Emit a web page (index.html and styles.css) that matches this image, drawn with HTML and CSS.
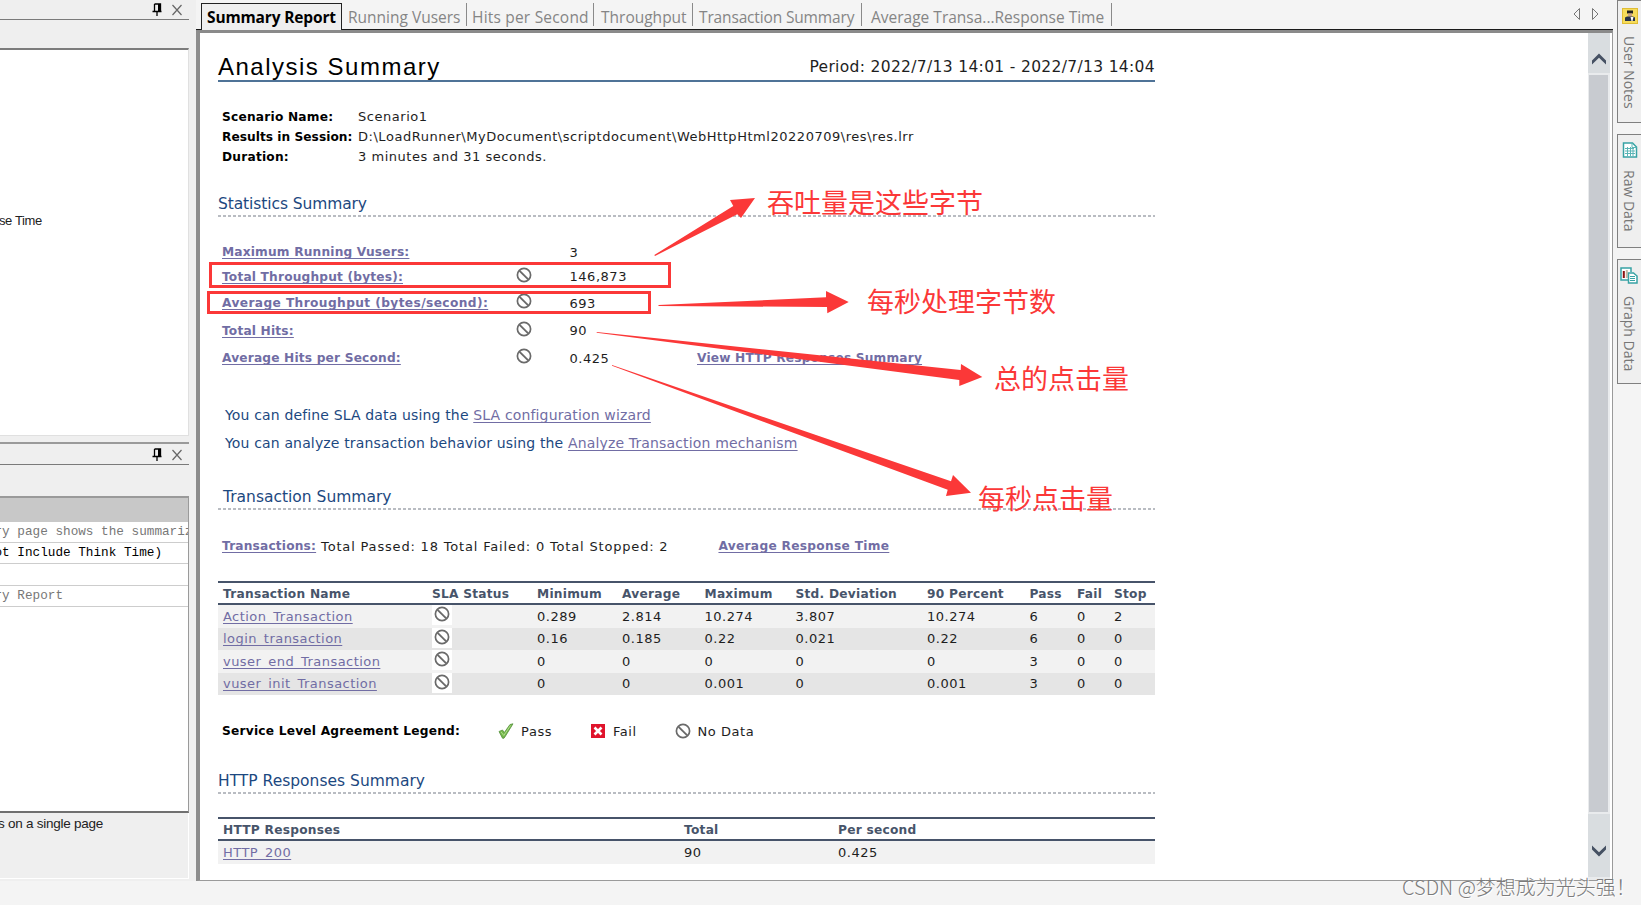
FILE: index.html
```html
<!DOCTYPE html>
<html lang="en">
<head>
    <meta charset="UTF-8">
    <title>Analysis Summary</title>
    <link rel="stylesheet" href="styles.css">
</head>
<body>
    <svg class="defs" width="0" height="0">
        <symbol id="nodata" viewBox="0 0 16 16">
            <circle cx="8" cy="8" r="6.6" fill="#fff" stroke="#6a6a6a" stroke-width="1.7"/>
            <path d="M3.6 3.8l8.6 8.6" stroke="#6a6a6a" stroke-width="1.9"/>
        </symbol>
        <symbol id="pin" viewBox="0 0 10 14">
            <path d="M2.5 1h6v7M2.5 1v7M0.5 8.5h9M5 8.5V13" fill="none" stroke="#000" stroke-width="1.3"/>
            <path d="M6 1h2.5v7H6z"/>
        </symbol>
        <symbol id="close" viewBox="0 0 10 12">
            <path d="M0.5 1l9 10M9.5 1l-9 10" stroke="#666" stroke-width="1.2"/>
        </symbol>
    </svg>

    <div class="app">
        <aside class="left">
            <div class="pane-title first">
                <svg width="10" height="14"><use href="#pin"/></svg>
                <svg width="10" height="12"><use href="#close"/></svg>
            </div>
            <div class="pane-gap"></div>
            <div class="tree"><span>se Time</span></div>
            <div class="pane-title">
                <svg width="10" height="14"><use href="#pin"/></svg>
                <svg width="10" height="12"><use href="#close"/></svg>
            </div>
            <div class="pane-gap second"></div>
            <div class="props">
                <div class="prop-head"></div>
                <div class="prop"><span>ry page shows the summariz</span></div>
                <div class="prop strong"><span>ot Include Think Time)</span></div>
                <div class="prop"></div>
                <div class="prop"><span>ry Report</span></div>
            </div>
            <div class="hint"><span>s on a single page</span></div>
        </aside>

        <main class="main">
            <nav class="tabs">
                <div class="tab active"><span>Summary Report</span></div>
                <div class="tab t1"><span>Running Vusers</span></div>
                <div class="tab t2"><span>Hits per Second</span></div>
                <div class="tab t3"><span>Throughput</span></div>
                <div class="tab t4"><span>Transaction Summary</span></div>
                <div class="tab t5"><span>Average Transa...Response Time</span></div>
                <div class="arrows">
                    <svg width="8" height="14"><path d="M6.5 1.5v11L1 7z" fill="none" stroke="#777"/></svg>
                    <svg width="8" height="14"><path d="M1.5 1.5v11L7 7z" fill="none" stroke="#777"/></svg>
                </div>
            </nav>

            <div class="frame">
                <div class="report">
                    <header class="head">
                        <h1>Analysis Summary</h1>
                        <span class="period">Period: 2022/7/13 14:01 - 2022/7/13 14:04</span>
                    </header>

                    <div class="info">
                        <b>Scenario Name:</b><span>Scenario1</span>
                        <b class="tight">Results in Session:</b><span>D:\LoadRunner\MyDocument\scriptdocument\WebHttpHtml20220709\res\res.lrr</span>
                        <b>Duration:</b><span>3 minutes and 31 seconds.</span>
                    </div>

                    <h2 class="h-stat">Statistics Summary</h2>

                    <div class="stats">
                        <div class="stat"><a href="#">Maximum Running Vusers:</a><i></i><span>3</span></div>
                        <div class="stat"><a href="#">Total Throughput (bytes):</a><svg><use href="#nodata"/></svg><span>146,873</span></div>
                        <div class="stat"><a class="wide" href="#">Average Throughput (bytes/second):</a><svg><use href="#nodata"/></svg><span>693</span></div>
                        <div class="stat"><a href="#">Total Hits:</a><svg><use href="#nodata"/></svg><span>90</span></div>
                        <div class="stat"><a href="#">Average Hits per Second:</a><svg><use href="#nodata"/></svg><span>0.425</span><a href="#">View HTTP Responses Summary</a></div>
                    </div>

                    <div class="notes">
                        <p>You can define SLA data using the <a href="#">SLA configuration wizard</a></p>
                        <p>You can analyze transaction behavior using the <a href="#">Analyze Transaction mechanism</a></p>
                    </div>

                    <h2 class="h-trans">Transaction Summary</h2>

                    <div class="totals">
                        <a href="#">Transactions:</a>
                        <span>Total Passed: 18 Total Failed: 0 Total Stopped: 2</span>
                        <a class="avg" href="#">Average Response Time</a>
                    </div>

                    <div class="table trans">
                        <div class="row th"><span>Transaction Name</span><span>SLA Status</span><span>Minimum</span><span>Average</span><span>Maximum</span><span>Std. Deviation</span><span>90 Percent</span><span>Pass</span><span>Fail</span><span>Stop</span></div>
                        <div class="row"><a href="#">Action_Transaction</a><svg><use href="#nodata"/></svg><span>0.289</span><span>2.814</span><span>10.274</span><span>3.807</span><span>10.274</span><span>6</span><span>0</span><span>2</span></div>
                        <div class="row"><a href="#">login_transaction</a><svg><use href="#nodata"/></svg><span>0.16</span><span>0.185</span><span>0.22</span><span>0.021</span><span>0.22</span><span>6</span><span>0</span><span>0</span></div>
                        <div class="row"><a href="#">vuser_end_Transaction</a><svg><use href="#nodata"/></svg><span>0</span><span>0</span><span>0</span><span>0</span><span>0</span><span>3</span><span>0</span><span>0</span></div>
                        <div class="row"><a href="#">vuser_init_Transaction</a><svg><use href="#nodata"/></svg><span>0</span><span>0</span><span>0.001</span><span>0</span><span>0.001</span><span>3</span><span>0</span><span>0</span></div>
                    </div>

                    <div class="legend">
                        <b>Service Level Agreement Legend:</b>
                        <svg viewBox="0 0 16 16"><path d="M1 8.500l3.500-1.500 1.800 2.500L12 1.500 15 .8 7.500 13 6 15.200H4.500z" fill="#74b84a" stroke="#55913c" stroke-width=".8"/><path d="M3 8.800l2.800 3.700L12.500 2.500" fill="none" stroke="#b0dc8c"/></svg>
                        <span>Pass</span>
                        <svg viewBox="0 0 16 16"><rect x="1" y="1" width="14" height="14" fill="#e0142c"/><path d="M4.500 4.500l7 7M11.500 4.500l-7 7" stroke="#fff" stroke-width="2.600"/></svg>
                        <span>Fail</span>
                        <svg><use href="#nodata"/></svg>
                        <span>No Data</span>
                    </div>

                    <h2 class="h-http">HTTP Responses Summary</h2>

                    <div class="table http">
                        <div class="row th"><span>HTTP Responses</span><span>Total</span><span>Per second</span></div>
                        <div class="row"><a href="#">HTTP_200</a><span>90</span><span>0.425</span></div>
                    </div>
                </div>

                <div class="scroll">
                    <div class="btn up"><svg width="14" height="12"><path d="M0 7.500L7 .5l7 7v4L7 4.800 0 11.500z" fill="#465163"/></svg></div>
                    <div class="thumb"></div>
                    <div class="btn down"><svg width="14" height="12"><path d="M0 4.500l7 7 7-7v-4L7 7.200 0 .5z" fill="#465163"/></svg></div>
                </div>
            </div>
        </main>

        <aside class="right">
            <div class="side s1">
                <svg width="16" height="16"><rect x=".5" y=".5" width="15" height="15" fill="#f6dc5a" stroke="#e0bd34"/><path d="M5 2.500h6v3H5z" fill="#222"/><path d="M6 5.500h4v3H6z" fill="#c9a08c"/><path d="M3 13V9.500l2-1h6l2 1V13z" fill="#26324a"/><path d="M8.500 9h3l-1 4h-1z" fill="#fff"/></svg>
                <span>User Notes</span>
            </div>
            <div class="side s2">
                <svg width="16" height="16"><path d="M1.500 1h9l4 4v10h-13z" fill="#fff" stroke="#38a3a5" stroke-width="1.500"/><path d="M10 1v4.500h4.500M3 6.500h9M3 9h10M3 11.500h10M5.500 5v9M8.500 5v9M11 7v7" fill="none" stroke="#5bb5b6"/></svg>
                <span>Raw Data</span>
            </div>
            <div class="side s3">
                <svg width="18" height="17"><path d="M8 13H1V1h10v4" fill="#fff" stroke="#38a3a5" stroke-width="1.500"/><path d="M3.800 4v7" stroke="#8a1010" stroke-width="2"/><path d="M6.800 3v8" stroke="#c9b9a6" stroke-width="2"/><path d="M8.500 6h5l3.500 3v7H8.500z" fill="#fff" stroke="#38a3a5" stroke-width="1.500"/><path d="M10 9.500h5M10 11.500h5M10 13.500h5" stroke="#38a3a5"/></svg>
                <span>Graph Data</span>
            </div>
        </aside>
    </div>

    <!-- red marks drawn over the report -->
    <svg class="marks" width="1641" height="905" fill="#fb3838">
        <rect x="210.500" y="263.500" width="459" height="23" fill="none" stroke="#fb3838" stroke-width="3"/>
        <rect x="208.500" y="292.500" width="441" height="20" fill="none" stroke="#fb3838" stroke-width="3"/>
        <path d="M654.300 255L733.300 206 730 200 755 198 741 218 737.300 214.300 655 256z"/>
        <path d="M658.500 305L826 297.300V291L848.700 302 827.300 313.300 827 307 658.500 306z"/>
        <path d="M596.700 332L960.700 370 961 364 982.300 377 959.300 386V380L596.700 332.800z"/>
        <path d="M612 365L951 481.300 953 475 971 492.700 946 496 947.700 489.700 612 365.800z"/>
    </svg>
    <div class="mark m1">吞吐量是这些字节</div>
    <div class="mark m2">每秒处理字节数</div>
    <div class="mark m3">总的点击量</div>
    <div class="mark m4">每秒点击量</div>
    <div class="watermark">CSDN @梦想成为光头强！</div>
</body>
</html>
```
FILE: styles.css
```css
* {
    margin: 0;
    padding: 0;
    box-sizing: border-box;
}

body {
    width: 1641px;
    height: 905px;
    overflow: hidden;
    position: relative;
    background: #f4f4f4;
    font-family: "DejaVu Sans", sans-serif;
    font-size: 13px;
    letter-spacing: 0.53px;
    color: #1e1e1e;
}

svg {
    display: block;
    flex: none;
}

.defs {
    position: absolute;
}

.app {
    display: flex;
    height: 905px;
}

/* left panes */
.left {
    width: 196px;
    height: 881px;
    background: #efefef;
    padding-right: 7px;
    overflow: hidden;
    font-family: "Liberation Sans", sans-serif;
    letter-spacing: 0;
    white-space: nowrap;
}

.pane-title {
    height: 23px;
    border-top: 2px solid #9a9a9a;
    border-bottom: 1px solid #7a7a7a;
    display: flex;
    justify-content: flex-end;
    align-items: center;
    gap: 10px;
    padding-top: 1px;
    padding-right: 7px;
}

.pane-title.first {
    height: 20px;
    border-top: none;
    padding-top: 0;
}

.pane-gap {
    height: 28px;
}

.pane-gap.second {
    height: 31px;
}

.tree {
    height: 388px;
    margin-bottom: 6px;
    border-top: 2px solid #7c7c7c;
    border-right: 1px solid #e0e0e0;
    border-bottom: 1px solid #e0e0e0;
    background: #fff;
    padding-top: 163px;
    line-height: 16px;
    font-size: 13px;
    letter-spacing: -0.4px;
    text-indent: -1px;
    color: #222;
}

.props {
    height: 317px;
    border: solid #9a9a9a;
    border-width: 2px 1px 2px 0;
    border-bottom-color: #707070;
    background: #fff;
    overflow: hidden;
    font-family: "Liberation Mono", monospace;
    font-size: 12.7px;
}

.prop-head {
    height: 24px;
    background: #c8c8c8;
}

.prop {
    height: 21.2px;
    border-bottom: 1px solid #cdcdcd;
    line-height: 20px;
    color: #777;
    text-indent: -5.5px;
}

.prop.strong {
    color: #000;
}

.hint {
    height: 66px;
    padding-top: 2px;
    line-height: 18px;
    border-right: 1px solid #fff;
    border-bottom: 1px solid #fff;
    font-size: 13.5px;
    letter-spacing: -0.25px;
    text-indent: -2px;
    color: #222;
}

/* tabs */
.main {
    width: 1417px;
    height: 881px;
}

.tabs {
    height: 30px;
    display: flex;
    align-items: flex-start;
    padding: 3px 0 0 5px;
    border-bottom: 1px solid #1a1a1a;
    font-family: "Open Sans", sans-serif;
    font-size: 15.5px;
    letter-spacing: 0;
    color: #858585;
    white-space: nowrap;
}

.tab {
    height: 23px;
    padding-left: 6px;
    border-right: 1px solid #8a8a8a;
    line-height: 28px;
}

.tab.active {
    width: 141px;
    height: 27px;
    padding-left: 5px;
    border: 1px solid #222;
    border-bottom: none;
    background: #efefef;
    line-height: 26px;
    font-weight: bold;
    letter-spacing: -0.15px;
    color: #000;
}

.t1 { width: 125px; }
.t2 { width: 127px; padding-left: 5px; letter-spacing: 0.2px; }
.t3 { width: 99px; padding-left: 7px; }
.t4 { width: 169px; padding-left: 6px; letter-spacing: -0.15px; }
.t5 { width: 250px; padding-left: 9px; }

.arrows {
    display: flex;
    gap: 10px;
    margin: 4px 14px 0 auto;
}

.frame {
    height: 851px;
    display: flex;
    background: #fff;
    border-style: solid;
    border-width: 3px 1px 1px 4px;
    border-color: #8a8a8a #9a9a9a #9a9a9a #8c8c8c;
}

.report {
    width: 1388px;
    height: 844px;
    padding-left: 18px;
}

.report > * {
    width: 937px;
}

.head {
    height: 49px;
    border-bottom: 2px solid #4f7397;
    display: flex;
    justify-content: space-between;
    align-items: flex-end;
}

h1 {
    font: 24px/26px "Liberation Sans", sans-serif;
    letter-spacing: 1.5px;
    color: #000;
}

.period {
    font-size: 15.5px;
    letter-spacing: 0.33px;
    line-height: 25px;
}

.info {
    margin-top: 25px;
    padding-left: 4px;
    display: grid;
    grid-template-columns: 136px 1fr;
    grid-auto-rows: 20px;
    line-height: 20px;
    white-space: nowrap;
}

b {
    font-size: 12.2px;
    letter-spacing: 0.22px;
    color: #000;
}

.tight {
    letter-spacing: 0.03px;
}

h2 {
    font-size: 15.5px;
    font-weight: normal;
    letter-spacing: 0;
    color: #1c4880;
    background: repeating-linear-gradient(90deg, #b9bcc2 0 2.6px, transparent 2.6px 5px) bottom / 100% 2px no-repeat;
    display: flex;
    align-items: flex-end;
    line-height: 26px;
}

.h-stat { height: 50px; letter-spacing: -0.1px; }
.h-trans { height: 54px; margin-top: -1px; padding-left: 5px; }
.h-http { height: 46px; }

a {
    color: #716da4;
    text-decoration: underline;
    text-decoration-skip-ink: none;
    text-underline-offset: 2px;
}

.stats {
    margin-top: 23px;
    padding-left: 4px;
    display: grid;
    grid-template-rows: 24px 25px 28px 27px 28px;
    white-space: nowrap;
}

.stat {
    display: grid;
    grid-template-columns: 294px 53.5px 127.5px 1fr;
    align-items: center;
}

.stat a, .totals a {
    font-size: 12.2px;
    font-weight: bold;
    letter-spacing: 0.18px;
    justify-self: start;
}

.stat a.wide {
    letter-spacing: 0.4px;
}

.stat svg {
    width: 16px;
    height: 16px;
    margin-bottom: 4px;
}

.notes {
    margin-top: 30px;
    padding-left: 7px;
    font-size: 14px;
    letter-spacing: 0.15px;
    line-height: 27.5px;
    color: #1c4880;
}

.totals {
    height: 71px;
    padding-left: 4px;
    padding-top: 1px;
    display: flex;
    align-items: center;
    gap: 5px;
    white-space: nowrap;
}

.totals span {
    letter-spacing: 0.82px;
}

.totals .avg {
    margin-left: 45px;
    letter-spacing: 0.3px;
}

.table {
    border-top: 2px solid #47546a;
}

.row {
    display: grid;
    height: 22.5px;
    padding-left: 5px;
    align-items: center;
    white-space: nowrap;
    background: #f2f2f2;
}

.row:nth-child(odd) {
    background: #e5e5e5;
}

.row.th {
    height: 22px;
    padding-top: 2px;
    background: #fff;
    border-bottom: 2px solid #47546a;
    font-size: 12.2px;
    font-weight: bold;
    letter-spacing: 0.25px;
    color: #47546a;
}

.row a {
    justify-self: start;
    letter-spacing: 0.45px;
}

.trans .row {
    grid-template-columns: 209px 105px 85px 82.5px 91px 131.5px 102.5px 47.5px 37px 1fr;
}

.http .row {
    grid-template-columns: 461px 154px 1fr;
}

.row svg {
    width: 20px;
    height: 20px;
    padding: 1px 2px 3px;
    margin-bottom: 2px;
    background: #fff;
}

.legend {
    height: 53px;
    padding: 19px 0 0 4px;
    display: flex;
    align-items: center;
    white-space: nowrap;
}

.legend svg {
    width: 16px;
    height: 16px;
    margin-right: 7px;
    margin-left: 38px;
}

.http {
    margin-top: 23px;
}

/* scrollbar */
.scroll {
    width: 22px;
    background: #e9ebed;
}

.btn {
    height: 40px;
    background: #d9dde0;
    padding: 20px 0 0 4px;
}

.btn.down {
    height: 63px;
    padding-top: 31px;
}

.thumb {
    height: 737px;
    margin: 2px 2px 2px 1px;
    background: #c8cbd0;
}

/* right tabs */
.right {
    width: 28px;
    padding: 0 0 0 4px;
    font-family: "Open Sans", sans-serif;
    font-size: 14px;
    letter-spacing: 0;
    color: #777;
}

.side {
    border: 1px solid #808080;
    border-right: none;
    background: #efefef;
    height: 123px;
    margin-bottom: 11px;
    padding: 7px 0 0 4px;
    display: flex;
    flex-direction: column;
    gap: 12px;
    white-space: nowrap;
}

.side span {
    writing-mode: vertical-rl;
    width: 20px;
    line-height: 20px;
    margin-left: -3px;
}

.s2 { height: 114px; }
.s3 { height: 125px; padding-left: 2px; }
.s3 span { margin-left: -1px; }

/* overlay */
.marks {
    position: absolute;
    left: 0;
    top: 0;
}

.mark {
    position: absolute;
    font: 27px/40px "Noto Sans CJK SC", sans-serif;
    letter-spacing: 0;
    color: #fb3838;
    white-space: nowrap;
}

.m1 { left: 767px; top: 182px; }
.m2 { left: 867px; top: 281px; }
.m3 { left: 994px; top: 358px; }
.m4 { left: 978px; top: 478px; }

.watermark {
    position: absolute;
    left: 1402px;
    top: 872px;
    font: 300 20px/30px "Noto Sans CJK SC", sans-serif;
    letter-spacing: 0;
    color: #7c7c7c;
    text-shadow: 1px 1px 0 #fff;
    white-space: nowrap;
}
```
